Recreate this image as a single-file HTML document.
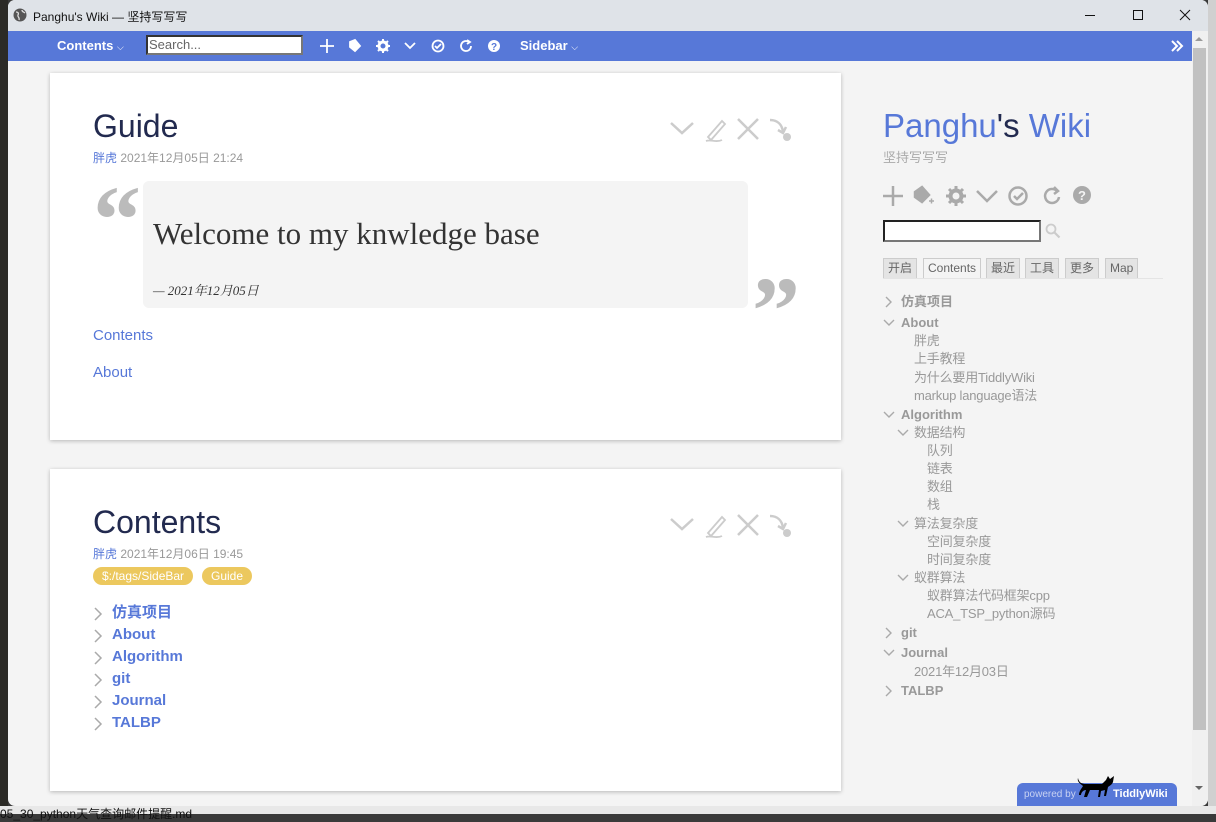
<!DOCTYPE html>
<html><head><meta charset="utf-8"><style>
*{margin:0;padding:0;box-sizing:border-box}
body{width:1216px;height:814px;overflow:hidden;background:#3a3a3a;font-family:"Liberation Sans","Noto Sans CJK SC",sans-serif;position:relative}
.abs{position:absolute}
#bgl{left:0;top:0;width:8px;height:814px;background:#2b2a26}
#bgb{left:0;top:806px;width:1216px;height:8px;background:#e8e8e8}
#bgr{left:1208px;top:0;width:8px;height:814px;background:#d0d0d0}
#win{left:8px;top:0;width:1200px;height:806px;background:#f4f4f4;border-radius:7px;overflow:hidden}
#title{left:0;top:0;width:1200px;height:31px;background:#dfe3e8;font-size:12px;color:#111}
#bar{left:0;top:31px;width:1184px;height:30px;background:#5778d8;color:#fff;font-weight:bold;font-size:13px}
.card{background:#fff;box-shadow:0 1px 4px rgba(0,0,0,.25);position:absolute}
.h{font-size:32px;color:#222a4f;position:absolute}
.sub{font-size:12px;color:#999;position:absolute}
.sub b{color:#5778d8;font-weight:normal}
.lnk{color:#5778d8;font-size:15px;position:absolute}
.tag{background:#ecc85e;color:#fff;font-size:12px;border-radius:10px;padding:2px 9px;position:absolute}
.toc{position:absolute;left:93px;font-size:15px;font-weight:bold;color:#5778d8}
.toc div{height:22px;line-height:22px;position:relative;padding-left:19px}
.ch{position:absolute;left:0;top:5px}
.tr{position:absolute;height:18px;line-height:18px;font-size:13px;color:#999;white-space:nowrap;letter-spacing:-0.2px}
.tr.b{font-weight:bold;letter-spacing:0}
.tab{position:absolute;top:258px;height:20px;border:1px solid #ccc;border-bottom:none;background:#e4e4e4;font-size:12px;color:#666;line-height:19px;padding:0 4px}
.q{position:absolute;font:bold 96px 'Liberation Serif',serif;color:#bbb;line-height:1}
</style></head><body>
<div class="abs" id="bgl"></div><div class="abs" id="bgr"></div><div class="abs" id="bgb"></div>
<div class="abs" style="left:0;top:805px;font-size:12px;color:#111">05_30_python天气查询邮件提醒.md</div>
<div class="abs" id="win">
 <div class="abs" id="title">
  <svg class="abs" style="left:5px;top:8px" width="14" height="14" viewBox="0 0 14 14"><circle cx="7" cy="7" r="6.5" fill="#555"/><path d="M3 4c2 0 3 1 2 3s2 2 1 5M9 2c0 2 2 2 3 3" stroke="#ddd" stroke-width="1.3" fill="none"/></svg>
  <span class="abs" style="left:25px;top:8px">Panghu's Wiki — 坚持写写写</span>
  <div class="abs" style="left:1077px;top:15px;width:10px;height:1px;background:#111"></div>
  <div class="abs" style="left:1125px;top:10px;width:10px;height:10px;border:1px solid #111"></div>
  <svg class="abs" style="left:1171px;top:9px" width="12" height="12"><path d="M1 1L11 11M11 1L1 11" stroke="#111" stroke-width="1"/></svg>
 </div>
 <div class="abs" id="bar">
  <span class="abs" style="left:49px;top:7px">Contents <span style="font-size:9px;font-weight:normal">⌵</span></span>
  <div class="abs" style="left:138px;top:4px;width:157px;height:20px;background:#fff;border:2px solid #333;border-right-color:#777;border-bottom-color:#777;color:#666;font-weight:normal;font-size:13px;padding-left:1px;line-height:16px">Search...</div>
  <svg class="abs" style="left:308px;top:6px" width="190" height="18" viewBox="0 0 190 18" fill="none" stroke="#fff" stroke-width="1.8">
   <path d="M11 2v14M4 9h14"/>
   <path d="M34 5l5-2 5 6-5 5-5-4z" fill="#fff"/>
   <circle cx="67" cy="9" r="4" stroke-width="3"/><path d="M67 2v3M67 13v3M60 9h3M71 9h3M62 4l2 2M70 12l2 2M72 4l-2 2M64 12l-2 2" stroke-width="2"/>
   <path d="M89 6l5 5 5-5"/>
   <circle cx="122" cy="9" r="5.5"/><path d="M119 9l2 2 4-4"/>
   <path d="M153 5a5 5 0 1 0 2 4M151 3l3 2-3 2"/>
   <circle cx="178" cy="9" r="6" fill="#fff" stroke="none"/><text x="175" y="13" font-size="10" fill="#5778d8" stroke="none" font-weight="bold">?</text>
  </svg>
  <span class="abs" style="left:512px;top:7px">Sidebar <span style="font-size:9px;font-weight:normal">⌵</span></span>
  <svg class="abs" style="left:1162px;top:8px" width="14" height="14"><path d="M2 2l5 5-5 5M7 2l5 5-5 5" stroke="#fff" stroke-width="2" fill="none"/></svg>
 </div>
 <div class="abs" style="left:1184px;top:31px;width:16px;height:775px;background:#f0f0f0"></div>
 <div class="abs" style="left:1185px;top:48px;width:13px;height:682px;background:#c1c1c1"></div>
 <div class="abs" style="left:1187px;top:37px;width:0;height:0;border:4px solid transparent;border-bottom-color:#999;border-top:none"></div>
 <div class="abs" style="left:1187px;top:786px;width:0;height:0;border:4px solid transparent;border-top-color:#666;border-bottom:none"></div>
</div>

<!-- tiddler 1 -->
<div class="card" style="left:50px;top:73px;width:791px;height:367px"></div>
<div class="h" style="left:93px;top:108px">Guide</div>
<div class="sub" style="left:93px;top:149px"><b>胖虎</b> 2021年12月05日 21:24</div>
<svg class="abs" style="left:668px;top:115px" width="128" height="30" viewBox="0 0 128 30" fill="none" stroke="#ccc" stroke-width="2.5">
 <path d="M3 8l11 10 11-10"/>
 <path d="M40 22l14-16 3 3-14 16zM38 26c5-2 10 2 16-1" stroke-width="1.8"/>
 <path d="M70 4l20 20M90 4l-20 20"/>
 <path d="M102 5c7 0 12 4 13 12M110 15l5 3 3-6"/><circle cx="119" cy="22" r="4" fill="#ccc" stroke="none"/>
</svg>
<div class="q" style="left:93px;top:172px">“</div>
<div class="abs" style="left:143px;top:181px;width:605px;height:127px;background:#f4f4f4;border-radius:6px"></div>
<div class="abs" style="left:153px;top:216px;font:31px 'Liberation Serif',serif;color:#333">Welcome to my knwledge base</div>
<div class="abs" style="left:153px;top:280px;font:italic 13px 'Liberation Serif','Noto Serif CJK SC',serif;color:#333">— 2021年12月05日</div>
<div class="q" style="left:752px;top:263px">”</div>
<div class="lnk" style="left:93px;top:327px">Contents</div>
<div class="lnk" style="left:93px;top:364px">About</div>

<!-- tiddler 2 -->
<div class="card" style="left:50px;top:469px;width:791px;height:322px"></div>
<div class="h" style="left:93px;top:504px">Contents</div>
<div class="sub" style="left:93px;top:545px"><b>胖虎</b> 2021年12月06日 19:45</div>
<div class="tag" style="left:93px;top:567px">$:/tags/SideBar</div>
<div class="tag" style="left:202px;top:567px">Guide</div>
<svg class="abs" style="left:668px;top:511px" width="128" height="30" viewBox="0 0 128 30" fill="none" stroke="#ccc" stroke-width="2.5">
 <path d="M3 8l11 10 11-10"/>
 <path d="M40 22l14-16 3 3-14 16zM38 26c5-2 10 2 16-1" stroke-width="1.8"/>
 <path d="M70 4l20 20M90 4l-20 20"/>
 <path d="M102 5c7 0 12 4 13 12M110 15l5 3 3-6"/><circle cx="119" cy="22" r="4" fill="#ccc" stroke="none"/>
</svg>
<div class="toc" style="top:602px">
 <div><svg class="ch" width="10" height="14"><path d="M2 1l6 6-6 6" stroke="#aaa" stroke-width="1.5" fill="none"/></svg>仿真项目</div>
 <div><svg class="ch" width="10" height="14"><path d="M2 1l6 6-6 6" stroke="#aaa" stroke-width="1.5" fill="none"/></svg>About</div>
 <div><svg class="ch" width="10" height="14"><path d="M2 1l6 6-6 6" stroke="#aaa" stroke-width="1.5" fill="none"/></svg>Algorithm</div>
 <div><svg class="ch" width="10" height="14"><path d="M2 1l6 6-6 6" stroke="#aaa" stroke-width="1.5" fill="none"/></svg>git</div>
 <div><svg class="ch" width="10" height="14"><path d="M2 1l6 6-6 6" stroke="#aaa" stroke-width="1.5" fill="none"/></svg>Journal</div>
 <div><svg class="ch" width="10" height="14"><path d="M2 1l6 6-6 6" stroke="#aaa" stroke-width="1.5" fill="none"/></svg>TALBP</div>
</div>

<!-- sidebar -->
<div class="abs" style="left:883px;top:107px;font-size:33px;color:#5778d8">Panghu<span style="color:#222a4f">'s</span> Wiki</div>
<div class="abs" style="left:883px;top:147px;font-size:13px;color:#aaa">坚持写写写</div>
<svg class="abs" style="left:882px;top:184px" width="212" height="24" viewBox="0 0 212 24" fill="none" stroke="#aaa" stroke-width="2.5">
 <path d="M11 2v20M1 12h20"/>
 <path d="M33 8l7-5 7 8-7 7-7-5z" fill="#aaa"/><path d="M47 17h5M49.5 14.5v5" stroke-width="1.5"/>
 <circle cx="74" cy="12" r="5.5" stroke-width="4"/><path d="M74 2v4M74 18v4M64 12h4M80 12h4M67 5l3 3M78 16l3 3M81 5l-3 3M70 16l-3 3" stroke-width="3"/>
 <path d="M95 7l10 10 10-10"/>
 <circle cx="136" cy="12" r="8.5"/><path d="M132 12l3 3 6-6"/>
 <path d="M175 7a7 7 0 1 0 2 6M172 3l4 4-4 3"/>
 <circle cx="200" cy="11" r="9" fill="#aaa" stroke="none"/><text x="196" y="16" font-size="13" font-weight="bold" fill="#f4f4f4" stroke="none">?</text>
</svg>
<div class="abs" style="left:883px;top:220px;width:158px;height:22px;background:#fff;border:2px solid #222;border-right-color:#777;border-bottom-color:#777"></div>
<svg class="abs" style="left:1045px;top:223px" width="16" height="16"><circle cx="6" cy="6" r="4.5" stroke="#ccc" stroke-width="1.8" fill="none"/><path d="M9.5 9.5l5 5" stroke="#ccc" stroke-width="2.2"/></svg>
<div class="tab" style="left:883px">开启</div>
<div class="tab" style="left:923px;background:#f4f4f4;color:#666;height:21px">Contents</div>
<div class="tab" style="left:986px">最近</div>
<div class="tab" style="left:1025px">工具</div>
<div class="tab" style="left:1065px">更多</div>
<div class="tab" style="left:1105px">Map</div>
<div class="abs" style="left:883px;top:278px;width:280px;height:1px;background:#e4e4e4"></div>

<svg width="0" height="0" style="position:absolute"><defs>
<path id="cr" d="M2 1l5 5-5 5" stroke="#aaa" stroke-width="1.4" fill="none"/>
<path id="cd" d="M1 3l5 5 5-5" stroke="#aaa" stroke-width="1.4" fill="none"/></defs></svg>
<svg class="abs" style="left:884px;top:296px" width="10" height="12"><use href="#cr"/></svg>
<div class="tr b" style="left:901px;top:293px">仿真项目</div>
<svg class="abs" style="left:883px;top:317px" width="12" height="12"><use href="#cd"/></svg>
<div class="tr b" style="left:901px;top:314px">About</div>
<div class="tr" style="left:914px;top:332px">胖虎</div>
<div class="tr" style="left:914px;top:350px">上手教程</div>
<div class="tr" style="left:914px;top:369px">为什么要用TiddlyWiki</div>
<div class="tr" style="left:914px;top:387px">markup language语法</div>
<svg class="abs" style="left:883px;top:409px" width="12" height="12"><use href="#cd"/></svg>
<div class="tr b" style="left:901px;top:406px">Algorithm</div>
<svg class="abs" style="left:897px;top:427px" width="12" height="12"><use href="#cd"/></svg>
<div class="tr" style="left:914px;top:424px">数据结构</div>
<div class="tr" style="left:927px;top:442px">队列</div>
<div class="tr" style="left:927px;top:460px">链表</div>
<div class="tr" style="left:927px;top:478px">数组</div>
<div class="tr" style="left:927px;top:496px">栈</div>
<svg class="abs" style="left:897px;top:518px" width="12" height="12"><use href="#cd"/></svg>
<div class="tr" style="left:914px;top:515px">算法复杂度</div>
<div class="tr" style="left:927px;top:533px">空间复杂度</div>
<div class="tr" style="left:927px;top:551px">时间复杂度</div>
<svg class="abs" style="left:897px;top:572px" width="12" height="12"><use href="#cd"/></svg>
<div class="tr" style="left:914px;top:569px">蚁群算法</div>
<div class="tr" style="left:927px;top:587px">蚁群算法代码框架cpp</div>
<div class="tr" style="left:927px;top:605px">ACA_TSP_python源码</div>
<svg class="abs" style="left:884px;top:627px" width="10" height="12"><use href="#cr"/></svg>
<div class="tr b" style="left:901px;top:624px">git</div>
<svg class="abs" style="left:883px;top:647px" width="12" height="12"><use href="#cd"/></svg>
<div class="tr b" style="left:901px;top:644px">Journal</div>
<div class="tr" style="left:914px;top:663px">2021年12月03日</div>
<svg class="abs" style="left:884px;top:685px" width="10" height="12"><use href="#cr"/></svg>
<div class="tr b" style="left:901px;top:682px">TALBP</div>

<div class="abs" style="left:1017px;top:783px;width:160px;height:23px;background:#5778d8;border-radius:6px 6px 0 0"></div>
<div class="abs" style="left:1024px;top:789px;font-size:10px;color:#c8d2f2">powered by</div>
<svg class="abs" style="left:1076px;top:774px" width="44" height="28" viewBox="0 0 44 28"><path d="M2 4c1 5 4 6 8 6h16l4-4 2-4 2 3 4-3-1 6c-1 3-4 4-5 5l-2 9h-2l1-6-4 1-1 6h-2l1-7h-9l-3 7H8l2-7c-3 0-5 3-5 5H3c0-4 3-7 4-9C3 9 1 7 2 4z" fill="#000"/></svg>
<div class="abs" style="left:1113px;top:788px;font-size:11px;font-weight:bold;color:#fff">TiddlyWiki</div>
</body></html>
